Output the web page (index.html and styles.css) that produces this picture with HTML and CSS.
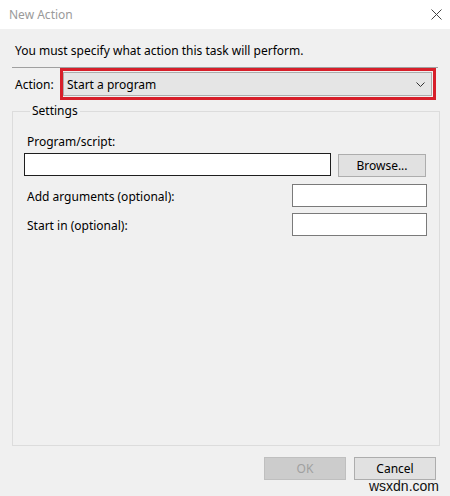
FILE: index.html
```html
<!DOCTYPE html>
<html>
<head>
<meta charset="utf-8">
<link rel="stylesheet" href="styles.css">
</head>
<body>
<div class="window">
  <div class="titlebar">
    <span class="title">New Action</span>
    <svg class="close" width="11" height="11" viewBox="0 0 11 11"><path d="M0.5 0.5 L10.5 10.5 M10.5 0.5 L0.5 10.5" stroke="#444" stroke-width="1" fill="none"/></svg>
  </div>
  <div class="content">
    <div class="intro">You must specify what action this task will perform.</div>
    <div class="sep"></div>
    <div class="action-row">
      <span class="action-label">Action:</span>
      <div class="highlight">
        <div class="combo">
          <span class="combo-text">Start a program</span>
          <svg class="chev" width="9" height="5" viewBox="0 0 9 5"><path d="M0.5 0.5 L4.5 4.5 L8.5 0.5" stroke="#333" stroke-width="1" fill="none"/></svg>
        </div>
      </div>
    </div>
    <fieldset class="group">
      <legend class="legend">Settings</legend>
      <div class="field-label">Program/script:</div>
      <div class="program-row">
        <div class="textbox textbox-program"></div>
        <div class="button browse">Browse...</div>
      </div>
      <div class="opt-row">
        <span class="opt-label">Add arguments (optional):</span>
        <div class="textbox textbox-small"></div>
      </div>
      <div class="opt-row opt-row-2">
        <span class="opt-label">Start in (optional):</span>
        <div class="textbox textbox-small"></div>
      </div>
    </fieldset>
    <div class="footer">
      <div class="button ok">OK</div>
      <div class="button cancel">Cancel</div>
    </div>
    <div class="watermark">wsxdn.com</div>
  </div>
</div>
</body>
</html>
```

FILE: styles.css
```css
* { box-sizing: border-box; }
html, body {
  margin: 0;
  padding: 0;
  width: 450px;
  height: 496px;
  overflow: hidden;
  font-family: "Noto Sans", "Open Sans", sans-serif;
  font-size: 12px;
  line-height: 16px;
  color: #000;
}
.window {
  width: 450px;
  height: 496px;
  display: flex;
  flex-direction: column;
}
.titlebar {
  height: 29px;
  background: #fff;
  display: flex;
  align-items: center;
  padding: 0 8px 0 9px;
  flex: none;
}
.title {
  color: #9a9a9a;
  font-size: 12px;
  padding-top: 1px;
}
.close {
  margin-left: auto;
  margin-top: -1px;
}
.content {
  flex: 1;
  background: #f0f0f0;
  padding: 14px 10px 0 12px;
  position: relative;
}
.intro {
  padding-left: 3px;
}
.sep {
  height: 1px;
  background: #a0a0a0;
  margin: 8px 2px 0 0;
}
.action-row {
  display: flex;
  align-items: center;
  margin-right: 4px;
}
.action-label {
  width: 48px;
  padding-left: 3px;
  padding-top: 2px;
}
.highlight {
  flex: 1;
  height: 32px;
  border: 3px solid #d71f2a;
  padding: 1px 1px 1px 0;
}
.combo {
  height: 24px;
  background: #e5e5e5;
  border: 1px solid #adadad;
  display: flex;
  align-items: center;
  padding: 0 6px 0 3px;
}
.combo-text {
  flex: 1;
  padding-top: 2px;
}
.chev {
  margin-top: 1px;
}
.group {
  margin: 2px 0 0 0;
  padding: 0 0 0 11px;
  border: 1px solid #dcdcdc;
  height: 344px;
  min-width: 0;
}
.legend {
  margin-left: 6px;
  padding: 1px 2px 2px 2px;
  line-height: 16px;
}
.field-label {
  margin-top: 13px;
  padding-left: 3px;
}
.program-row {
  display: flex;
  margin-top: 3px;
  align-items: flex-start;
}
.textbox {
  height: 23px;
  background: #fff;
  border: 1px solid #7a7a7a;
}
.textbox-program {
  width: 307px;
  border-color: #1e1e1e;
}
.button {
  height: 23px;
  background: #e1e1e1;
  border: 1px solid #adadad;
  display: flex;
  align-items: center;
  justify-content: center;
  padding-top: 1px;
}
.browse {
  width: 88px;
  margin-left: 7px;
  margin-top: 1px;
}
.opt-row {
  display: flex;
  justify-content: space-between;
  align-items: center;
  margin-top: 7px;
  padding-right: 12px;
}
.opt-row-2 {
  margin-top: 6px;
}
.opt-label {
  padding-left: 3px;
  padding-top: 3px;
}
.textbox-small {
  width: 135px;
}
.footer {
  display: flex;
  justify-content: flex-end;
  gap: 8px;
  margin: 11px 4px 0 0;
}
.ok, .cancel {
  width: 82px;
}
.ok {
  background: #cccccc;
  border-color: #bfbfbf;
  color: #a0a0a0;
}
.watermark {
  position: absolute;
  right: 11px;
  bottom: 2px;
  font-family: "Liberation Sans", Arial, sans-serif;
  font-size: 14px;
  line-height: 16px;
  color: #111;
}
```
